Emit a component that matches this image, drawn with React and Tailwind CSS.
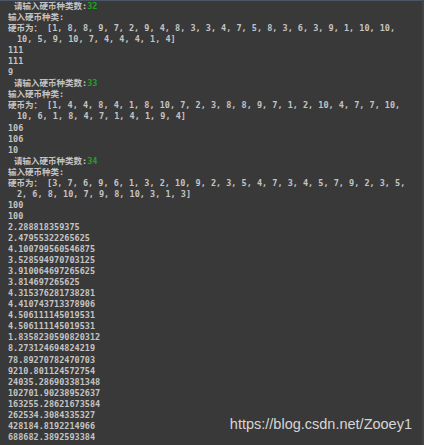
const blocks = [
  {
    n: "32",
    coins: [
      "硬币为： [1, 8, 8, 9, 7, 2, 9, 4, 8, 3, 3, 4, 7, 5, 8, 3, 6, 3, 9, 1, 10, 10,",
      "10, 5, 9, 10, 7, 4, 4, 4, 1, 4]",
    ],
    out: ["111", "111", "9"],
  },
  {
    n: "33",
    coins: [
      "硬币为： [1, 4, 4, 8, 4, 1, 8, 10, 7, 2, 3, 8, 8, 9, 7, 1, 2, 10, 4, 7, 7, 10,",
      "10, 6, 1, 8, 4, 7, 1, 4, 1, 9, 4]",
    ],
    out: ["106", "106", "10"],
  },
  {
    n: "34",
    coins: [
      "硬币为： [3, 7, 6, 9, 6, 1, 3, 2, 10, 9, 2, 3, 5, 4, 7, 3, 4, 5, 7, 9, 2, 3, 5,",
      "2, 6, 8, 10, 7, 9, 8, 10, 3, 1, 3]",
    ],
    out: [
      "100",
      "100",
      "2.288818359375",
      "2.47955322265625",
      "4.100799560546875",
      "3.528594970703125",
      "3.910064697265625",
      "3.814697265625",
      "4.315376281738281",
      "4.410743713378906",
      "4.506111145019531",
      "4.506111145019531",
      "1.8358230590820312",
      "8.273124694824219",
      "78.89270782470703",
      "9210.801124572754",
      "24035.286903381348",
      "102701.90238952637",
      "163255.28621673584",
      "262534.3084335327",
      "428184.8192214966",
      "688682.3892593384",
    ],
  },
];

export default function App() {
  return (
    <div className="relative w-[424px] h-[445px] overflow-hidden bg-[#393939] border-t border-[#4b5566] border-r-2 border-r-[#444444]">
      <div
        className="pl-2 text-[8.5px] leading-[11.05px] font-bold text-[#c4c4c4] whitespace-pre"
        style={{ fontFamily: '"DejaVu Sans Mono", "Noto Sans CJK SC", monospace' }}
      >
        {blocks.map((b) => (
          <div key={b.n}>
            <div className="pl-[6px]">
              请输入硬币种类数:<span className="text-[#1fa01f]">{b.n}</span>
            </div>
            <div>输入硬币种类:</div>
            <div>{b.coins[0]}</div>
            <div className="pl-[9px]">{b.coins[1]}</div>
            {b.out.map((line, i) => (
              <div key={i}>{line}</div>
            ))}
          </div>
        ))}
      </div>
      {/* watermark */}
      <div
        className="absolute right-[10px] bottom-[9px] text-[14.5px] text-[#d6d6d6]"
        style={{ fontFamily: '"Liberation Sans", Arial, sans-serif' }}
      >
        https://blog.csdn.net/Zooey1
      </div>
    </div>
  );
}
